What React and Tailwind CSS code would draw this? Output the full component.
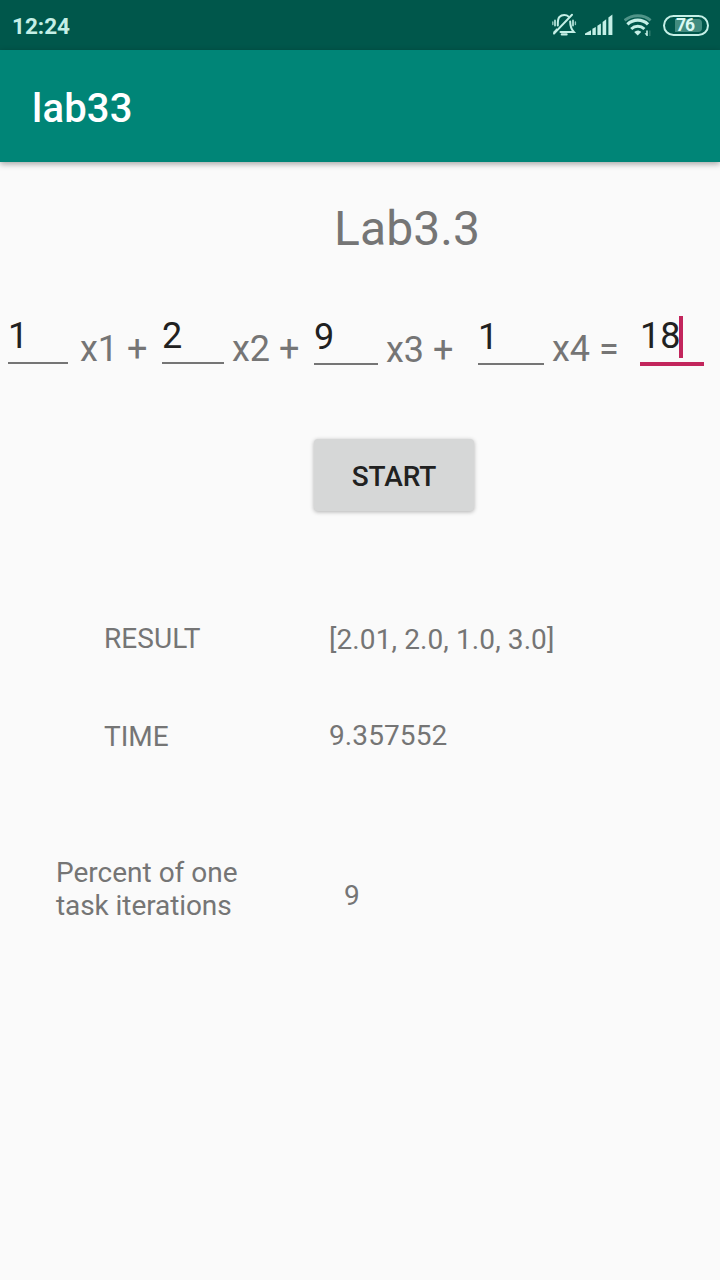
import React from "react";

function MutedBell() {
  return (
    <svg className="h-7 w-7" viewBox="550 11 28 28" fill="none" stroke="#c4efe6" strokeWidth="2" strokeLinecap="round">
      <path d="M568.6 16.6 C566.6 14.6 562 14.2 559.4 17 C557.6 19 557.8 21.5 557.8 25.5" />
      <path d="M570.2 21.5 C570.2 26.5 571 29 573.8 32 H560.5" />
      <path d="M556.6 29.5 C556 31 555 31.4 554.2 32.2" />
      <path d="M572 14.8 L554 33.6" />
      <path d="M561.8 34.4 H566.6" strokeWidth="2.2" />
      <path d="M555 20.5 V25.5 M573 20.5 V25.5" strokeWidth="1.9" opacity="0.85" />
      <path d="M552.8 22 V24.5 M575.4 22 V24.5" strokeWidth="1.4" opacity="0.75" />
    </svg>
  );
}

function Signal() {
  return (
    <svg className="h-[22px] w-7" viewBox="585 14 28 22" fill="#c4efe6">
      <path d="M585 35 V33.5 L591 30.2 V35 Z" />
      <path d="M592.4 35 V28.8 L595.8 27 V35 Z" />
      <path d="M597.4 35 V25.8 L600.9 23.4 V35 Z" />
      <path d="M602.6 35 V22 L606.2 19.2 V35 Z" />
      <path d="M608.4 35 V17.5 L612.4 14.6 V35 Z" />
    </svg>
  );
}

function Wifi() {
  return (
    <svg className="h-[22px] w-7" viewBox="624 14 28 22" fill="none" stroke="#c4efe6" strokeWidth="3.2">
      <path d="M624.6 20.4 C632 14.2 643.6 14.2 650.6 20.4" stroke="#4f9488" strokeWidth="2.8" />
      <path d="M627.4 24.4 C633.4 18.8 642.2 18.8 648 24.4" />
      <path d="M631.2 29 C635 25.3 640.6 25.3 644.4 29" strokeWidth="3" />
      <path d="M634.2 31.9 C636.4 29.9 639.2 29.9 641.2 31.9 L637.7 35.4 Z" fill="#c4efe6" stroke="none" />
      <path d="M647.8 30.5 V36 H646.6 L644.6 33.2 H646.2 V30.5 Z" fill="#c4efe6" stroke="none" />
      <path d="M649.8 30.5 V36" stroke="#2e7a6d" strokeWidth="1.4" />
    </svg>
  );
}

function Battery() {
  return (
    <div className="flex h-[21px] w-[46px] items-center rounded-full border-2 border-[#c4efe6] pl-[10px]">
      <div className="flex h-[13px] w-[27px] shrink-0 items-center rounded-r-[4px] bg-[#428c7f] pl-[1px]">
        <span className="text-[17.5px] leading-[20px] font-bold tracking-[-1px] text-[#dcfaf4]">76</span>
      </div>
    </div>
  );
}

function Field({ value, className }) {
  return (
    <div className={`shrink-0 border-b-2 border-[#757575] text-[#212121] ${className}`}>{value}</div>
  );
}

function Term({ children, className }) {
  return <span className={`shrink-0 whitespace-pre text-[#757575] ${className}`}>{children}</span>;
}

export default function App() {
  return (
    <div className="flex h-[1280px] w-[720px] flex-col overflow-hidden bg-[#fafafa] font-['Roboto',sans-serif] text-[28px] leading-[33px] text-[#757575]">
      <div className="flex h-[50px] shrink-0 items-center justify-between bg-[#00574b] pr-[11px] pl-[12px]">
        <span className="pt-[1px] text-[22.5px] leading-[28px] font-bold text-[#c4efe6]">12:24</span>
        <div className="flex items-center">
          <MutedBell />
          <div className="ml-[7px]"><Signal /></div>
          <div className="ml-[11px]"><Wifi /></div>
          <div className="ml-[11px]"><Battery /></div>
        </div>
      </div>
      <header className="flex h-28 shrink-0 items-center bg-[#008577] pt-[5px] pl-8 shadow-[0_2px_6px_rgba(0,0,0,0.35)]">
        <h1 className="text-[40px] leading-[47px] font-medium tracking-[0.2px] text-white">lab33</h1>
      </header>

      <main className="flex flex-col">
        <h2 className="mt-[39px] ml-[334px] text-[48px] leading-[56px] tracking-[0.1px]">Lab3.3</h2>

        <div className="mt-[56px] flex h-[55px] items-start pl-2 text-[36px] leading-[42px]">
          <Field value="1" className="mt-[2px] h-[49px] w-[60px]" />
          <Term className="mt-[15px] ml-3 w-[82px]">x1 +</Term>
          <Field value="2" className="mt-[2px] h-[49px] w-[62px]" />
          <Term className="mt-[15px] ml-2 w-[82px]">x2 +</Term>
          <Field value="9" className="mt-[3px] h-[49px] w-[64px]" />
          <Term className="mt-[16px] ml-2 w-[92px]">x3 +</Term>
          <Field value="1" className="mt-[3px] h-[49px] w-[66px]" />
          <Term className="mt-[15px] ml-2 w-[88px]">x4 =</Term>
          <div className="mt-[2px] flex h-[51px] w-16 shrink-0 border-b-4 border-[#c2255c] text-[#212121]">
            <span className="w-[39px]">18</span>
            <span className="mt-px h-[42px] w-1 bg-[#c2255c]" />
          </div>
        </div>

        <button className="mt-[71px] ml-[314px] flex h-[72px] w-40 items-center justify-center rounded-[4px] bg-[#d6d7d7] pt-[3px] text-[28px] leading-[33px] font-medium tracking-[-0.1px] text-[#212121] shadow-[0_1px_4px_rgba(0,0,0,0.3)]">
          START
        </button>

        <div className="mt-[111px] flex pl-[104px]">
          <span className="w-[225px] tracking-[0.1px]">RESULT</span>
          <span className="pt-px tracking-[0.1px]">[2.01, 2.0, 1.0, 3.0]</span>
        </div>
        <div className="mt-[63px] flex pl-[104px]">
          <span className="w-[225px] pt-px">TIME</span>
          <span className="tracking-[0.1px]">9.357552</span>
        </div>
        <div className="mt-[103px] flex pl-14">
          <p className="w-[288px]">
            Percent of one
            <br />
            <span className="tracking-[-0.08px]">task iterations</span>
          </p>
          <span className="pt-[23px]">9</span>
        </div>
      </main>
    </div>
  );
}
